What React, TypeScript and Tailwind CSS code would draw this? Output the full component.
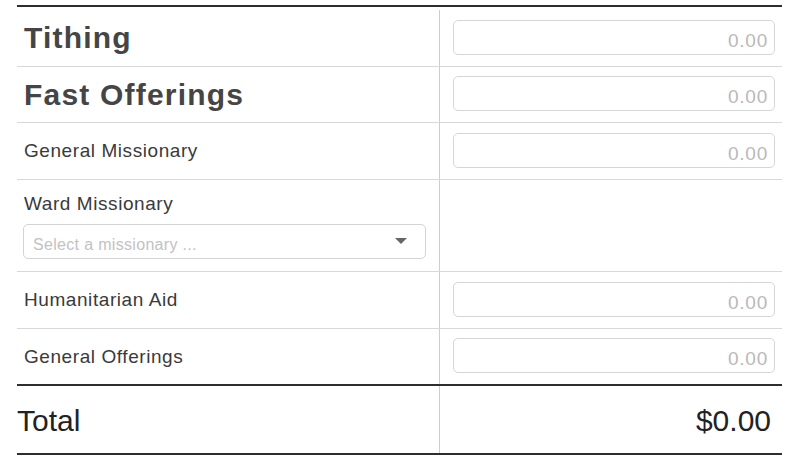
import React from "react";

function Amount() {
  return (
    <input
      type="text"
      placeholder="0.00"
      className="w-full h-[35px] rounded-[5px] border border-[#d6d6d6] bg-white pl-2 pr-[6px] pt-[6px] text-right text-[19px] tracking-[0.04em] text-[#555] placeholder:text-[#b9b9b9] outline-none"
    />
  );
}

function Row({
  height,
  label,
  big,
  inputTop,
  first,
  last,
}: {
  height: string;
  label: string;
  big?: boolean;
  inputTop: string;
  first?: boolean;
  last?: boolean;
}) {
  return (
    <div className={`flex ${height} ${last ? "" : "border-b border-[#d8d8d8]"}`}>
      <div
        className={`w-[423px] shrink-0 border-r border-[#cdcdcd] pl-[7px] flex items-center ${
          first ? "mt-[3px]" : ""
        }`}
      >
        {big ? (
          <span className="text-[30px] leading-[30px] font-bold tracking-[0.04em] text-[#454545]">
            {label}
          </span>
        ) : (
          <span className="text-[19px] leading-[22px] tracking-[0.03em] text-[#3a3a3a]">
            {label}
          </span>
        )}
      </div>
      <div className={`flex-1 pl-[13px] pr-[7px] ${inputTop}`}>
        <Amount />
      </div>
    </div>
  );
}

export default function App() {
  return (
    <div className="w-[800px] h-[458px] bg-white pt-[5px] px-[17px] font-['Liberation_Sans',Arial,sans-serif]">
      <div className="w-[765px] border-t-2 border-[#2e2e2e]">
        <Row height="h-[60px]" label="Tithing" big inputTop="pt-[13px]" first />
        <Row height="h-[56px]" label="Fast Offerings" big inputTop="pt-[9px]" />
        <Row height="h-[57px]" label="General Missionary" inputTop="pt-[10px]" />

        <div className="flex h-[92px] border-b border-[#d8d8d8]">
          <div className="w-[423px] shrink-0 border-r border-[#cdcdcd] pl-[6px] pr-[12px] pt-[13px] flex flex-col">
            <span className="pl-[1px] text-[19px] leading-[22px] tracking-[0.03em] text-[#3a3a3a]">
              Ward Missionary
            </span>
            <div className="mt-[9px] w-[403px] h-[35px] rounded-[5px] border border-[#d3d3d3] bg-white flex items-center pl-[9px] pr-[18px]">
              <span className="flex-1 pt-[6px] text-[16px] leading-[20px] tracking-[0.02em] text-[#c2c2c2]">
                Select a missionary ...
              </span>
              <svg width="12" height="6" viewBox="0 0 12 6" className="mt-[-2px]">
                <path d="M0 0 L12 0 L6 6 Z" fill="#666" />
              </svg>
            </div>
          </div>
          <div className="flex-1" />
        </div>

        <Row height="h-[57px]" label="Humanitarian Aid" inputTop="pt-[10px]" />
        <Row height="h-[55px]" label="General Offerings" inputTop="pt-[9px]" last />

        <div className="flex h-[71px] border-t-2 border-b-2 border-[#2e2e2e]">
          <div className="w-[423px] shrink-0 border-r border-[#cdcdcd] flex items-center pt-[3px]">
            <span className="text-[30px] leading-[34px] text-[#222]">Total</span>
          </div>
          <div className="flex-1 flex items-center justify-end pr-[11px] pt-[3px]">
            <span className="text-[30px] leading-[34px] text-[#222]">$0.00</span>
          </div>
        </div>
      </div>
    </div>
  );
}
